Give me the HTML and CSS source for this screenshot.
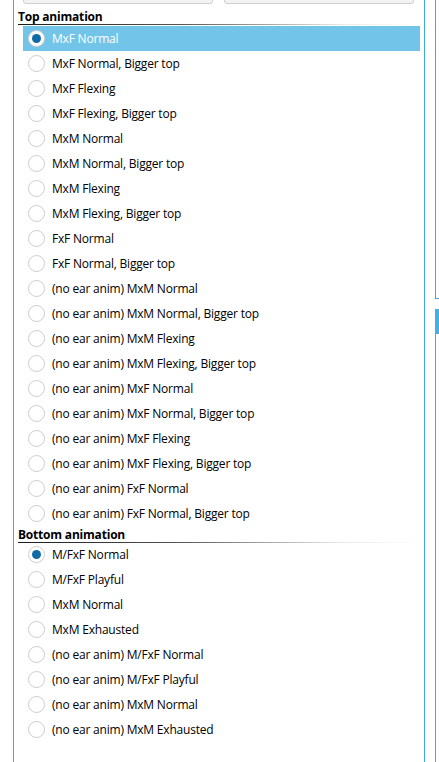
FILE: index.html
```html
<!DOCTYPE html>
<html>
<head>
<meta charset="utf-8">
<link rel="stylesheet" href="styles.css">
</head>
<body>
<div class="layout">
  <div class="panel">
    <div class="buttons">
      <div class="btn"></div>
      <div class="btn"></div>
    </div>
    <div class="heading">Top animation</div>
    <ul class="list">
      <li class="item selected"><span class="radio checked"></span>MxF Normal</li>
      <li class="item"><span class="radio"></span>MxF Normal, Bigger top</li>
      <li class="item"><span class="radio"></span>MxF Flexing</li>
      <li class="item"><span class="radio"></span>MxF Flexing, Bigger top</li>
      <li class="item"><span class="radio"></span>MxM Normal</li>
      <li class="item"><span class="radio"></span>MxM Normal, Bigger top</li>
      <li class="item"><span class="radio"></span>MxM Flexing</li>
      <li class="item"><span class="radio"></span>MxM Flexing, Bigger top</li>
      <li class="item"><span class="radio"></span>FxF Normal</li>
      <li class="item"><span class="radio"></span>FxF Normal, Bigger top</li>
      <li class="item"><span class="radio"></span>(no ear anim) MxM Normal</li>
      <li class="item"><span class="radio"></span>(no ear anim) MxM Normal, Bigger top</li>
      <li class="item"><span class="radio"></span>(no ear anim) MxM Flexing</li>
      <li class="item"><span class="radio"></span>(no ear anim) MxM Flexing, Bigger top</li>
      <li class="item"><span class="radio"></span>(no ear anim) MxF Normal</li>
      <li class="item"><span class="radio"></span>(no ear anim) MxF Normal, Bigger top</li>
      <li class="item"><span class="radio"></span>(no ear anim) MxF Flexing</li>
      <li class="item"><span class="radio"></span>(no ear anim) MxF Flexing, Bigger top</li>
      <li class="item"><span class="radio"></span>(no ear anim) FxF Normal</li>
      <li class="item"><span class="radio"></span>(no ear anim) FxF Normal, Bigger top</li>
    </ul>
    <div class="heading">Bottom animation</div>
    <ul class="list">
      <li class="item"><span class="radio checked"></span>M/FxF Normal</li>
      <li class="item"><span class="radio"></span>M/FxF Playful</li>
      <li class="item"><span class="radio"></span>MxM Normal</li>
      <li class="item"><span class="radio"></span>MxM Exhausted</li>
      <li class="item"><span class="radio"></span>(no ear anim) M/FxF Normal</li>
      <li class="item"><span class="radio"></span>(no ear anim) M/FxF Playful</li>
      <li class="item"><span class="radio"></span>(no ear anim) MxM Normal</li>
      <li class="item"><span class="radio"></span>(no ear anim) MxM Exhausted</li>
    </ul>
  </div>
  <div class="side">
    <div class="side-box"></div>
    <div class="side-thumb"></div>
    <div class="side-rest"></div>
  </div>
</div>
</body>
</html>
```

FILE: styles.css
```css
html, body {
  margin: 0;
  padding: 0;
  background: #ffffff;
  height: 100%;
  overflow: hidden;
}
body {
  font-family: "Open Sans", "Noto Sans", sans-serif;
  font-size: 12px;
  color: #000;
}
.layout {
  display: flex;
  height: 762px;
  padding-left: 13px;
  gap: 10px;
}
.panel {
  width: 410px;
  border-left: 1px solid #3ea9df;
  border-right: 1px solid #3ea9df;
  padding-left: 4px;
  box-sizing: content-box;
}
.buttons {
  display: flex;
  gap: 11px;
  margin-left: 5px;
  margin-top: -20px;
  height: 24px;
}
.btn {
  width: 188px;
  height: 22px;
  border: 1px solid #cfcfcf;
  border-radius: 3px;
  background: #f3f3f3;
}
.heading {
  margin-top: 4px;
  box-sizing: border-box;
  height: 16px;
  padding-top: 2px;
  line-height: 14px;
  font-weight: bold;
  position: relative;
  margin-bottom: 2px;
  letter-spacing: -0.2px;
}
.heading::after {
  content: "";
  position: absolute;
  left: 0;
  right: 2px;
  bottom: -1px;
  height: 1px;
  background: linear-gradient(to right, #1a1a1a 0%, #555 40%, rgba(200,200,200,0.4) 80%, rgba(255,255,255,0) 100%);
}
.list + .heading {
  margin-top: 0;
  margin-bottom: 0;
}
.list {
  list-style: none;
  margin: 0 0 0 5px;
  padding: 0;
  width: 397px;
}
.item {
  height: 25px;
  display: flex;
  align-items: center;
  padding-left: 5px;
  gap: 7px;
  white-space: nowrap;
  letter-spacing: -0.2px;
}
.item.selected {
  background: #72c5e9;
  color: #fff;
}
.radio {
  width: 17px;
  height: 17px;
  box-sizing: border-box;
  border: 1px solid #cdcdcd;
  border-radius: 50%;
  background: #fff;
  flex: none;
  display: flex;
  align-items: center;
  justify-content: center;
}
.radio.checked::after {
  content: "";
  width: 9px;
  height: 9px;
  border-radius: 50%;
  background: #0f6aa8;
}
.side {
  display: flex;
  flex-direction: column;
  width: 4px;
}
.side-box {
  height: 298px;
  border-left: 1px solid #3ea9df;
  border-bottom: 1px solid #3ea9df;
}
.side-thumb {
  margin-top: 10px;
  height: 25px;
  background: #45b1e3;
}
.side-rest {
  flex: 1;
  border-left: 1px solid #3ea9df;
}
```
